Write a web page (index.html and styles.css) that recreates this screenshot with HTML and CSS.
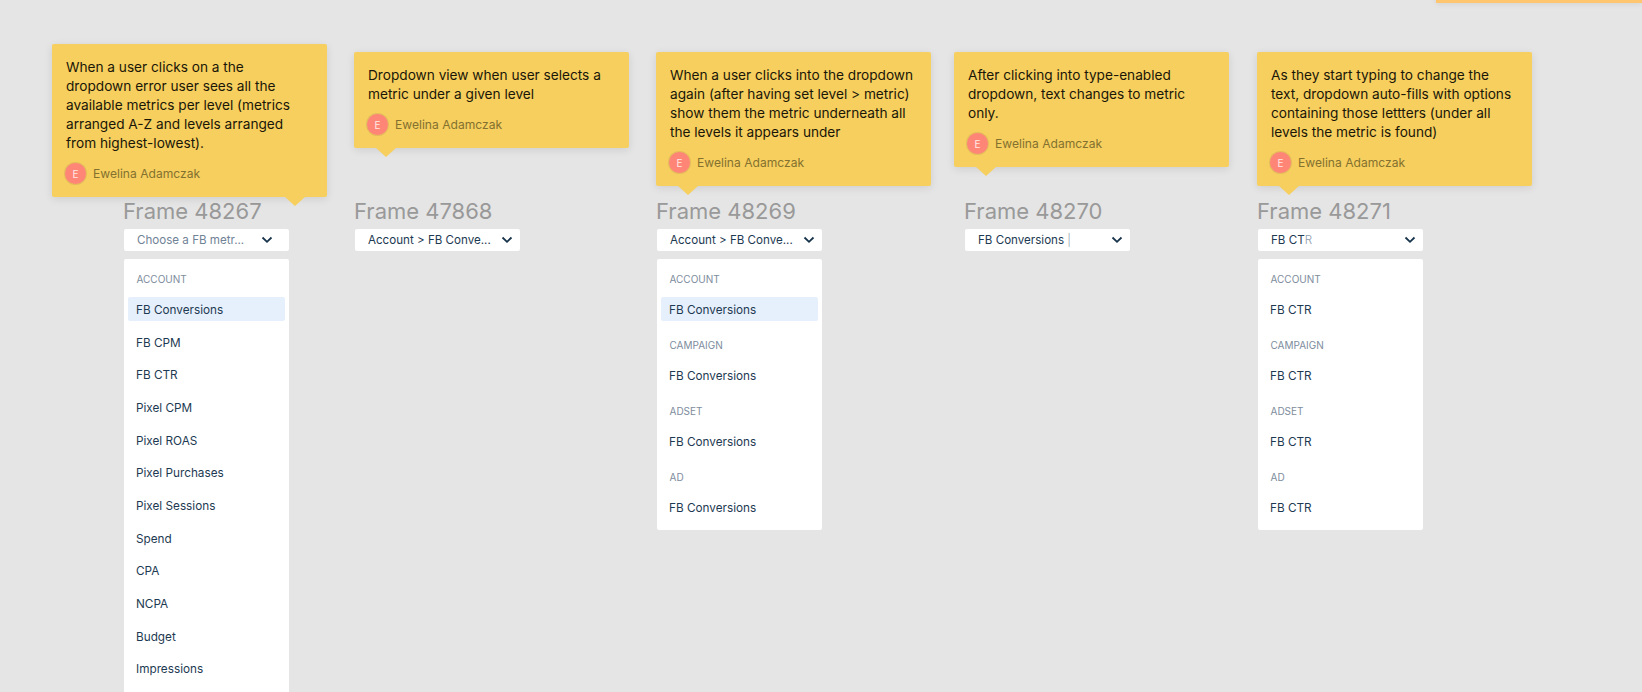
FILE: index.html
```html
<!DOCTYPE html>
<html lang="en">
<head>
<meta charset="utf-8">
<title>Dropdown frames</title>
<link rel="stylesheet" href="styles.css">
</head>
<body>
<main class="canvas">
  <div class="peek"></div>

  <aside class="note note-1">
    <p class="note-text">When a user clicks on a the dropdown error user sees all the available metrics per level (metrics arranged A-Z and levels arranged from highest-lowest).</p>
    <div class="author"><span class="avatar">E</span><span class="author-name">Ewelina Adamczak</span></div>
    <span class="tail tail-right"></span>
  </aside>
  <aside class="note note-2">
    <p class="note-text">Dropdown view when user selects a metric under a given level</p>
    <div class="author"><span class="avatar">E</span><span class="author-name">Ewelina Adamczak</span></div>
    <span class="tail"></span>
  </aside>
  <aside class="note note-3">
    <p class="note-text">When a user clicks into the dropdown again (after having set level &gt; metric) show them the metric underneath all the levels it appears under</p>
    <div class="author"><span class="avatar">E</span><span class="author-name">Ewelina Adamczak</span></div>
    <span class="tail"></span>
  </aside>
  <aside class="note note-4">
    <p class="note-text">After clicking into type-enabled dropdown, text changes to metric only.</p>
    <div class="author"><span class="avatar">E</span><span class="author-name">Ewelina Adamczak</span></div>
    <span class="tail"></span>
  </aside>
  <aside class="note note-5">
    <p class="note-text">As they start typing to change the text, dropdown auto-fills with options containing those lettters (under all levels the metric is found)</p>
    <div class="author"><span class="avatar">E</span><span class="author-name">Ewelina Adamczak</span></div>
    <span class="tail"></span>
  </aside>

  <section class="frame frame-1">
    <h2 class="frame-title">Frame 48267</h2>
    <div class="select select-empty">
      <span class="select-text placeholder">Choose a FB metr...</span>
      <svg class="chevron" viewBox="0 0 12 8"><path d="M1.5 1.5 6 5.8l4.5-4.3"/></svg>
    </div>
    <div class="menu">
      <div class="menu-label">ACCOUNT</div>
      <div class="menu-item active">FB Conversions</div>
      <div class="menu-item">FB CPM</div>
      <div class="menu-item">FB CTR</div>
      <div class="menu-item">Pixel CPM</div>
      <div class="menu-item">Pixel ROAS</div>
      <div class="menu-item">Pixel Purchases</div>
      <div class="menu-item">Pixel Sessions</div>
      <div class="menu-item">Spend</div>
      <div class="menu-item">CPA</div>
      <div class="menu-item">NCPA</div>
      <div class="menu-item">Budget</div>
      <div class="menu-item">Impressions</div>
    </div>
  </section>

  <section class="frame frame-2">
    <h2 class="frame-title">Frame 47868</h2>
    <div class="select">
      <span class="select-text">Account &gt; FB Conve...</span>
      <svg class="chevron" viewBox="0 0 12 8"><path d="M1.5 1.5 6 5.8l4.5-4.3"/></svg>
    </div>
  </section>

  <section class="frame frame-3">
    <h2 class="frame-title">Frame 48269</h2>
    <div class="select">
      <span class="select-text">Account &gt; FB Conve...</span>
      <svg class="chevron" viewBox="0 0 12 8"><path d="M1.5 1.5 6 5.8l4.5-4.3"/></svg>
    </div>
    <div class="menu">
      <div class="menu-label">ACCOUNT</div>
      <div class="menu-item active grouped">FB Conversions</div>
      <div class="menu-label">CAMPAIGN</div>
      <div class="menu-item grouped">FB Conversions</div>
      <div class="menu-label">ADSET</div>
      <div class="menu-item grouped">FB Conversions</div>
      <div class="menu-label">AD</div>
      <div class="menu-item grouped">FB Conversions</div>
    </div>
  </section>

  <section class="frame frame-4">
    <h2 class="frame-title">Frame 48270</h2>
    <div class="select">
      <span class="select-text">FB Conversions <span class="typed-light">|</span></span>
      <svg class="chevron" viewBox="0 0 12 8"><path d="M1.5 1.5 6 5.8l4.5-4.3"/></svg>
    </div>
  </section>

  <section class="frame frame-5">
    <h2 class="frame-title">Frame 48271</h2>
    <div class="select">
      <span class="select-text">FB CT<span class="typed-light">R</span></span>
      <svg class="chevron" viewBox="0 0 12 8"><path d="M1.5 1.5 6 5.8l4.5-4.3"/></svg>
    </div>
    <div class="menu">
      <div class="menu-label">ACCOUNT</div>
      <div class="menu-item grouped">FB CTR</div>
      <div class="menu-label">CAMPAIGN</div>
      <div class="menu-item grouped">FB CTR</div>
      <div class="menu-label">ADSET</div>
      <div class="menu-item grouped">FB CTR</div>
      <div class="menu-label">AD</div>
      <div class="menu-item grouped">FB CTR</div>
    </div>
  </section>
</main>
</body>
</html>
```

FILE: styles.css
```css
* { box-sizing: border-box; }

html, body {
  margin: 0;
  height: 100%;
  overflow: hidden;
  background: #e5e5e5;
}

.canvas {
  position: relative;
  width: 1642px;
  height: 692px;
  overflow: hidden;
  font-family: Inter, "Liberation Sans", sans-serif;
}

.peek {
  position: absolute;
  left: 1436px;
  top: -20px;
  width: 206px;
  height: 23px;
  background: #ffc56f;
  box-shadow: 0 1px 6px rgba(0, 0, 0, .08);
}

.note {
  position: absolute;
  width: 275px;
  padding: 14px 16px 13px 14px;
  background: #f6cf5e;
  border-radius: 2px;
  box-shadow: 0 2px 8px rgba(0, 0, 0, .1);
  z-index: 2;
}

.note-1 { left: 52px; top: 44px; }
.note-2 { left: 354px; top: 52px; }
.note-3 { left: 656px; top: 52px; }
.note-4 { left: 954px; top: 52px; }
.note-5 { left: 1257px; top: 52px; }

.note-text {
  margin: 0;
  font-size: 13.65px;
  line-height: 19px;
  color: #1a1608;
}

.author {
  display: flex;
  align-items: center;
  gap: 7px;
  margin-top: 10px;
  height: 21px;
}

.avatar {
  display: flex;
  align-items: center;
  justify-content: center;
  width: 21px;
  height: 21px;
  margin-left: -1px;
  border-radius: 50%;
  background: #ff8577;
  box-shadow: 0 0 0 1px rgba(200, 150, 90, .35);
  color: #ffe9e4;
  font-size: 10px;
}

.author-name {
  font-size: 12.1px;
  color: #84712f;
}

.tail {
  position: absolute;
  left: 22px;
  bottom: -9px;
  width: 0;
  height: 0;
  border-left: 10px solid transparent;
  border-right: 10px solid transparent;
  border-top: 9px solid #f6cf5e;
}

.tail-right {
  left: 233px;
}

.frame {
  position: absolute;
  top: 197px;
  width: 165px;
}

.frame-1 { left: 124px; }
.frame-2 { left: 355px; }
.frame-3 { left: 657px; }
.frame-4 { left: 965px; }
.frame-5 { left: 1258px; }

.frame-title {
  margin: 0 0 4px -1px;
  height: 28px;
  font-size: 22px;
  font-weight: 400;
  line-height: 28px;
  color: #999;
  white-space: nowrap;
}

.select {
  display: flex;
  align-items: center;
  justify-content: space-between;
  height: 21.5px;
  padding: 0 7.5px 0 13px;
  background: #fff;
  border-radius: 2px;
}

.select-empty {
  padding-right: 16.5px;
}

.select-text {
  font-size: 11.6px;
  color: #1d3a52;
  white-space: nowrap;
}

.placeholder { color: #708296; }
.typed-light { color: #8c9cab; font-weight: 300; }

.chevron {
  flex: none;
  width: 12px;
  height: 8px;
  fill: none;
  stroke: #16324a;
  stroke-width: 1.8;
}

.menu {
  display: flex;
  flex-direction: column;
  margin-top: 8.5px;
  padding: 13px 4px 11px;
  background: #fff;
  border-radius: 2px;
}

.menu-label {
  height: 14px;
  margin: 0 0 11px 8.5px;
  font-size: 10px;
  line-height: 14px;
  color: #7d8c9c;
}

.menu-item {
  height: 24px;
  margin-bottom: 8.67px;
  padding-left: 8px;
  font-size: 11.75px;
  line-height: 26px;
  color: #1d3a52;
  border-radius: 2px;
}

.menu-item.grouped {
  margin-bottom: 17px;
}

.menu-item.grouped:last-child {
  margin-bottom: 0;
}

.menu-item.active {
  background: #e6f0fc;
}
```
